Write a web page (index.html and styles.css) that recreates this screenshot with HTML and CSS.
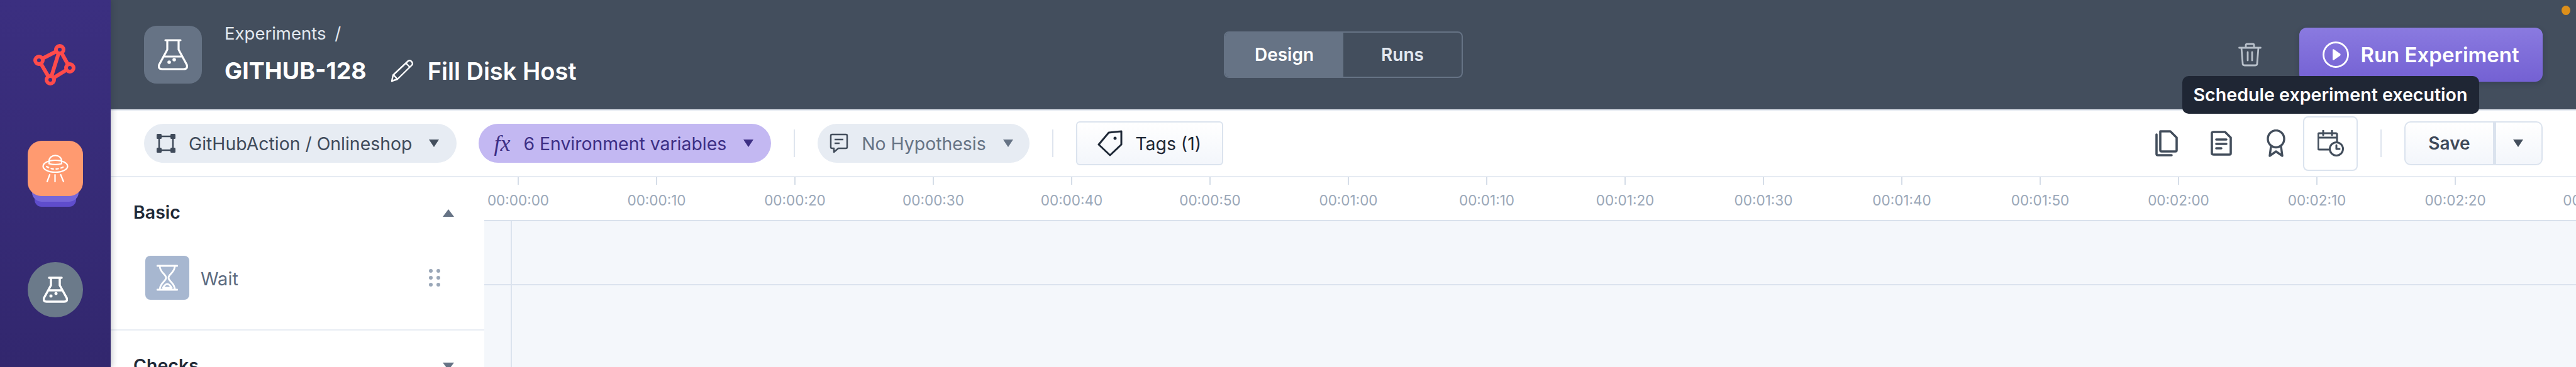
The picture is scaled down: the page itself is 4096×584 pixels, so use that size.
FILE: index.html
```html
<!DOCTYPE html>
<html lang="en">
<head>
<meta charset="utf-8">
<title>Experiment GITHUB-128</title>
<link rel="stylesheet" href="styles.css">
</head>
<body>
<div class="app">
  <nav class="rail">
    <svg class="logo" viewBox="52 68 72 70" fill="none" stroke="#ff4b4b" stroke-width="6">
      <path d="M95 79 62 96 80 127 111 108ZM95 79 80 127"/>
      <circle cx="95" cy="79" r="6" fill="#3a2f7f"/>
      <circle cx="62" cy="96" r="6" fill="#3a2f7f"/>
      <circle cx="111" cy="108" r="6" fill="#3a2f7f"/>
      <circle cx="80" cy="127" r="6" fill="#3a2f7f"/>
    </svg>
    <a class="rail-active">
      <svg class="ufo" viewBox="0 0 42 44" fill="none" stroke="#fff" stroke-width="2.200" stroke-linecap="round">
        <ellipse cx="21" cy="18.500" rx="19.500" ry="9.500"/>
        <path d="M11 14.500V10a10 8.700 0 0 1 20 0v4.500q-10 2.500-20 0Z"/>
        <path d="M7 19q14 8 28 0" stroke-dasharray="3.500 4.500"/>
        <path d="M12 32 8 43M20.500 32v11M29.500 32l4.500 11"/>
      </svg>
    </a>
    <a class="rail-item">
      <svg class="flask-sm" viewBox="0 0 40 42" fill="none" stroke="#fff" stroke-width="3.500" stroke-linecap="round" stroke-linejoin="round">
        <path d="M10 2h20M13 2v12L2 34q-2 6 4 6h28q6 0 4-6L27 14V2M9 22h22"/>
        <circle cx="13" cy="31" r="2.500" fill="#fff" stroke="none"/>
        <circle cx="21" cy="27" r="2.500" fill="#fff" stroke="none"/>
      </svg>
    </a>
  </nav>
  <main class="main">
    <header class="topbar">
      <div class="title-block">
        <span class="title-icon">
          <svg class="flask-lg" viewBox="0 0 48 50" fill="none" stroke="#fff" stroke-width="3.200" stroke-linecap="round" stroke-linejoin="round">
            <path d="M12 2h24M15 2v15L2 41q-2 7 5 7h34q7 0 5-7L33 17V2M9 28h30"/>
            <circle cx="18" cy="37" r="2.800" fill="#fff" stroke="none"/>
            <circle cx="26" cy="33" r="2.800" fill="#fff" stroke="none"/>
          </svg>
        </span>
        <div class="title-text">
          <div class="crumb">Experiments <span class="crumb-sep">/</span></div>
          <div class="title-row">
            <span class="key">GITHUB-128</span>
            <svg class="pencil" viewBox="0 0 37 37" fill="none" stroke="#fff" stroke-width="2.400" stroke-linejoin="round">
              <path d="M28 3q3-2 5.500 1t.500 5.500L11 32 2 35l2-9.500Z"/>
              <path d="M24.500 6.500 31 13M4.500 25l6.500 7"/>
            </svg>
            <span class="name">Fill Disk Host</span>
          </div>
        </div>
      </div>
      <div class="segment">
        <span class="seg seg-on">Design</span>
        <span class="seg">Runs</span>
      </div>
      <div class="top-actions">
        <svg class="trash" viewBox="0 0 37 38" fill="none" stroke="#b8c0ca" stroke-width="2.800" stroke-linecap="round" stroke-linejoin="round">
          <path d="M1.500 8h34M12 8V4q0-2 2-2h9q2 0 2 2v4M5 8l2 25q0 3 3 3h17q3 0 3-3l2-25M15 15v13M22 15v13"/>
        </svg>
        <button class="run">
          <svg class="play" viewBox="0 0 42 42" fill="none">
            <circle cx="21" cy="21" r="19.500" stroke="#fff" stroke-width="2.800"/>
            <path d="M16 13.500v15q0 2 2 1l10-7q1.500-1.500 0-3l-10-7q-2-1-2 1Z" fill="#fff"/>
          </svg>
          Run Experiment
        </button>
      </div>
      <i class="status-dot"></i>
    </header>

    <section class="toolbar">
      <div class="pill">
        <svg class="ic-target" viewBox="0 0 30 30" fill="#3f4a5a">
          <path d="M4 4h22v22H4Z" fill="none" stroke="#3f4a5a" stroke-width="2.500"/>
          <rect width="8" height="8" rx="1.500"/><rect x="22" width="8" height="8" rx="1.500"/>
          <rect y="22" width="8" height="8" rx="1.500"/><rect x="22" y="22" width="8" height="8" rx="1.500"/>
        </svg>
        <span class="pill-label">GitHubAction / Onlineshop</span>
        <i class="caret caret-dark"></i>
      </div>
      <div class="pill pill-purple">
        <span class="fx">fx</span>
        <span class="pill-label">6 Environment variables</span>
        <i class="caret caret-purple"></i>
      </div>
      <span class="vsep"></span>
      <div class="pill pill-muted">
        <svg class="ic-hyp" viewBox="0 0 30 32" fill="none" stroke="#434e5c" stroke-width="2.500" stroke-linejoin="round">
          <path d="M4 2h22q2 0 2 2v18q0 2-2 2H14l-7 6v-6H4q-2 0-2-2V4q0-2 2-2Z"/>
          <path d="M8 10h14M8 16h8"/>
        </svg>
        <span class="pill-label">No Hypothesis</span>
        <i class="caret caret-grey"></i>
      </div>
      <span class="vsep"></span>
      <button class="btn tags">
        <svg class="ic-tag" viewBox="0 0 40 42" fill="none" stroke="#1f2937" stroke-width="3" stroke-linejoin="round">
          <path d="M18 4 38 2v21L20 40 2 23Z"/>
          <circle cx="28" cy="13" r="2.500" fill="#1f2937" stroke="none"/>
        </svg>
        Tags (1)
      </button>
      <div class="tool-group">
        <span class="tool">
          <svg class="ic-copy" viewBox="0 0 36 42" fill="none" stroke="#434e5c" stroke-width="3.600" stroke-linejoin="round" stroke-linecap="round">
            <path d="M8 2h16l10 10v20q0 2-2 2H10q-2 0-2-2Z"/>
            <path d="M2 7v31q0 2 2 2h22"/>
          </svg>
        </span>
        <span class="tool">
          <svg class="ic-doc" viewBox="0 0 34 40" fill="none" stroke="#434e5c" stroke-width="3.600" stroke-linejoin="round" stroke-linecap="round">
            <path d="M5 2h18l9 9v25q0 2-2 2H5q-3 0-3-2V4q0-2 3-2Z"/>
            <path d="M9 14h16M9 21h16M9 28h8"/>
          </svg>
        </span>
        <span class="tool">
          <svg class="ic-medal" viewBox="0 0 30 44" fill="none" stroke="#434e5c" stroke-width="3.400" stroke-linejoin="round">
            <ellipse cx="15" cy="15" rx="13" ry="13.500"/>
            <path d="M7 27 5 42l10-7 10 7-2-15"/>
          </svg>
        </span>
        <span class="tool tool-on">
          <svg class="ic-sched" viewBox="0 0 42 42" fill="none" stroke="#434e5c" stroke-width="3" stroke-linecap="round" stroke-linejoin="round">
            <path d="M19 31H3q-2 0-2-2V7q0-2 2-2h26q2 0 2 2v11M1 12h30M9 1v7M23 1v7"/>
            <circle cx="30" cy="30" r="10.500"/>
            <path d="M30 24v6h5"/>
          </svg>
          <span class="tooltip">Schedule experiment execution</span>
        </span>
        <span class="vsep"></span>
        <div class="save-group">
          <button class="btn save">Save</button>
          <button class="btn save-more"><i class="caret caret-dark"></i></button>
        </div>
      </div>
    </section>

    <div class="workspace">
      <aside class="palette">
        <div class="group group-open">
          <div class="group-head"><span>Basic</span><i class="tri-up"></i></div>
          <div class="step">
            <span class="step-icon">
              <svg class="hourglass" viewBox="0 0 34 42" fill="none" stroke="#fff" stroke-width="2.800" stroke-linecap="round" stroke-linejoin="round">
                <path d="M1 2h32M1 40h32M5 2c0 11 10 13 10 19S5 29 5 40M29 2c0 11-10 13-10 19s10 8 10 19M10 37q7-12 14 0Z"/>
              </svg>
            </span>
            <span class="step-name">Wait</span>
            <span class="grip"><i></i><i></i><i></i><i></i><i></i><i></i></span>
          </div>
        </div>
        <div class="group">
          <div class="group-head"><span>Checks</span><i class="tri-down"></i></div>
        </div>
      </aside>
      <div class="timeline">
        <div class="ruler">
          <div class="mark"><i></i><span>00:00:00</span></div>
          <div class="mark"><i></i><span>00:00:10</span></div>
          <div class="mark"><i></i><span>00:00:20</span></div>
          <div class="mark"><i></i><span>00:00:30</span></div>
          <div class="mark"><i></i><span>00:00:40</span></div>
          <div class="mark"><i></i><span>00:00:50</span></div>
          <div class="mark"><i></i><span>00:01:00</span></div>
          <div class="mark"><i></i><span>00:01:10</span></div>
          <div class="mark"><i></i><span>00:01:20</span></div>
          <div class="mark"><i></i><span>00:01:30</span></div>
          <div class="mark"><i></i><span>00:01:40</span></div>
          <div class="mark"><i></i><span>00:01:50</span></div>
          <div class="mark"><i></i><span>00:02:00</span></div>
          <div class="mark"><i></i><span>00:02:10</span></div>
          <div class="mark"><i></i><span>00:02:20</span></div>
          <div class="mark"><i></i><span>00:02:30</span></div>
        </div>
        <div class="lanes">
          <div class="lane-cell lane-lead"></div><div class="lane-cell"></div>
          <div class="lane-cell lane-lead"></div><div class="lane-cell"></div>
        </div>
      </div>
    </div>
  </main>
</div>
</body>
</html>
```
FILE: styles.css
```css
* { box-sizing: border-box; }
html, body { margin: 0; height: 100%; }
body { font-family: Inter, "Noto Sans", sans-serif; color: #1f2937; background: #fff; overflow: hidden; }
button { font: inherit; }

.app { display: flex; height: 584px; overflow: hidden; }

/* left rail */
.rail {
  width: 176px; flex: none; display: flex; flex-direction: column; align-items: center;
  padding-top: 68px; background: linear-gradient(#3b2f80, #32276e);
  box-shadow: 3px 0 8px rgba(30, 41, 59, .22); position: relative; z-index: 3;
}
.logo { width: 72px; height: 70px; display: block; }
.rail-active {
  width: 88px; height: 88px; margin-top: 86px; border-radius: 22px; background: #ff9a70;
  display: flex; align-items: center; justify-content: center;
  box-shadow: 0 16px 0 -7px #7766d8, 0 28px 0 -11px #5f4dcc;
}
.ufo { width: 42px; height: 44px; }
.rail-item {
  width: 88px; height: 88px; margin-top: 105px; border-radius: 50%; background: #6b7a8a;
  display: flex; align-items: center; justify-content: center;
}
.flask-sm { width: 40px; height: 42px; }

.main { flex: 1; min-width: 0; display: flex; flex-direction: column; position: relative; }

/* header */
.topbar {
  height: 176px; flex: none; display: flex; align-items: center; padding: 0 53px;
  background: #434e5d; border-bottom: 2px solid #e3e8f0; position: relative;
}
.title-block { flex: 1; display: flex; align-items: center; gap: 36px; }
.title-icon {
  width: 92px; height: 92px; border-radius: 20px; background: #667385;
  display: flex; align-items: center; justify-content: center;
}
.flask-lg { width: 48px; height: 50px; }
.title-text { display: flex; flex-direction: column; gap: 21px; margin-top: -4px; }
.crumb { font-size: 27.5px; line-height: 34px; color: #e2e8f0; }
.crumb-sep { margin-left: 6px; }
.title-row { display: flex; align-items: center; color: #fff; height: 44px; }
.key { font-size: 37.500px; font-weight: 700; }
.pencil { width: 37px; height: 37px; margin: 0 22px 0 38px; }
.name { font-size: 38px; font-weight: 600; }

.segment {
  display: flex; width: 380px; height: 74px; border: 2px solid #667385; border-radius: 8px; overflow: hidden;
}
.seg {
  flex: 1; display: flex; align-items: center; justify-content: center;
  font-size: 28px; font-weight: 600; color: #e2e8f0;
}
.seg-on { background: #667385; color: #fff; }

.top-actions { flex: 1; display: flex; justify-content: flex-end; align-items: center; gap: 60px; }
.trash { width: 37px; height: 38px; }
.run {
  width: 387px; height: 86px; border: 0; border-radius: 12px; color: #fff;
  display: flex; align-items: center; justify-content: center; gap: 18px;
  font-size: 33px; font-weight: 600;
  background: linear-gradient(#8a7ae0, #7461d3);
  box-shadow: 0 3px 8px rgba(30, 41, 59, .3);
}
.play { width: 42px; height: 42px; }
.status-dot {
  position: absolute; right: 9px; top: 9px; width: 14px; height: 15px; border-radius: 50%; background: #dd8f1a;
}

/* toolbar */
.toolbar {
  height: 106px; flex: none; display: flex; align-items: center; padding: 0 53px;
  border-bottom: 2px solid #e6ebf2; background: #fff; position: relative; z-index: 2;
}
.pill {
  height: 62px; padding: 0 28px 0 20px; border-radius: 31px; background: #e7ecf3;
  display: flex; align-items: center; font-size: 28.4px; color: #3f4a5a;
}
.ic-target { width: 30px; height: 30px; margin-right: 21px; }
.pill-label { margin-right: 27px; white-space: nowrap; }
.pill-purple { background: #c3b8f2; margin-left: 35px; padding-left: 24px; color: #3d2f85; }
.fx { font: italic 36px "Liberation Serif", serif; width: 47px; }
.pill-muted { color: #667385; padding: 0 26px 0 19px; }
.ic-hyp { width: 30px; height: 32px; margin-right: 21px; }
.caret { display: block; width: 0; height: 0; border-left: 8px solid transparent; border-right: 8px solid transparent; border-top: 12px solid #434e5c; }
.caret-purple { border-top-color: #3d2f85; }
.caret-grey { border-top-color: #667385; }
.vsep { width: 2px; height: 44px; background: #dfe5ee; margin: 0 36px; flex: none; }

.btn {
  height: 70px; border: 2px solid #dbe3ee; border-radius: 6px; background: linear-gradient(#fff, #f3f6fb);
  display: flex; align-items: center; justify-content: center; padding: 0;
}
.tags { width: 234px; gap: 20px; font-size: 28.4px; color: #1f2937; }
.ic-tag { width: 40px; height: 42px; }

.tool-group { margin-left: auto; display: flex; align-items: center; }
.tool { width: 87px; height: 87px; display: flex; align-items: center; justify-content: center; position: relative; }
.tool-on { border: 2px solid #dbe3ee; border-radius: 8px; }
.ic-copy { width: 36px; height: 42px; }
.ic-doc { width: 34px; height: 40px; }
.ic-medal { width: 30px; height: 44px; }
.ic-sched { width: 42px; height: 42px; }
.tooltip {
  position: absolute; bottom: calc(100% + 6px); left: 50%; transform: translateX(-50%);
  height: 60px; padding: 0 18px; border-radius: 10px; background: #1f2634; color: #fff;
  display: flex; align-items: center; white-space: nowrap; font-size: 28.6px; font-weight: 600;
}
.save-group { display: flex; }
.save { width: 143px; border-radius: 10px 0 0 10px; font-size: 28px; font-weight: 600; color: #3f4a5a; }
.save-more { width: 77px; border-left: 0; border-radius: 0 10px 10px 0; box-shadow: inset 3px 0 0 #dbe3ee; }

/* workspace */
.workspace { flex: 1; min-height: 0; display: flex; }
.palette { width: 594px; flex: none; background: #fff; }
.group { height: 244px; }
.group-open { border-bottom: 2px solid #e8edf3; }
.group-head {
  height: 110px; padding: 0 48px 0 36px; display: flex; align-items: center; justify-content: space-between;
  font-size: 28.5px; font-weight: 600; color: #1f2937;
}
.tri-up, .tri-down { display: block; width: 0; height: 0; border-left: 9px solid transparent; border-right: 9px solid transparent; margin-top: 4px; }
.tri-up { border-bottom: 12px solid #667385; }
.tri-down { border-top: 12px solid #667385; }
.step { display: flex; align-items: center; padding: 15px 70px 0 55px; }
.step-icon {
  width: 70px; height: 70px; border-radius: 8px; background: #a7b7d0;
  display: flex; align-items: center; justify-content: center;
}
.hourglass { width: 34px; height: 42px; }
.step-name { margin: 2px 0 0 18px; font-size: 29px; color: #5c6b80; }
.grip { margin-left: auto; display: grid; grid-template-columns: 6px 6px; gap: 5px 6px; }
.grip i { width: 6px; height: 6px; border-radius: 50%; background: #9aa7b8; }

.timeline { flex: 1; min-width: 0; display: flex; flex-direction: column; overflow: hidden; }
.ruler {
  height: 70px; flex: none; display: flex; margin-left: -56px; background: #fff;
  border-bottom: 2px solid #d9e1ec;
}
.mark { width: 220px; flex: none; display: flex; flex-direction: column; align-items: center; }
.mark i { width: 2px; height: 12px; background: #d5dde8; }
.mark span { margin-top: 10px; font-size: 22.5px; line-height: 29px; color: #9aa7b8; }
.lanes {
  flex: 1; display: grid; grid-template-columns: 44px 1fr; grid-template-rows: 102px 1fr; background: #f4f7fb;
}
.lane-cell { border-bottom: 2px solid #dbe3ee; }
.lane-cell:nth-child(n+3) { border-bottom: 0; }
.lane-lead { border-right: 2px solid #dbe3ee; }
```
